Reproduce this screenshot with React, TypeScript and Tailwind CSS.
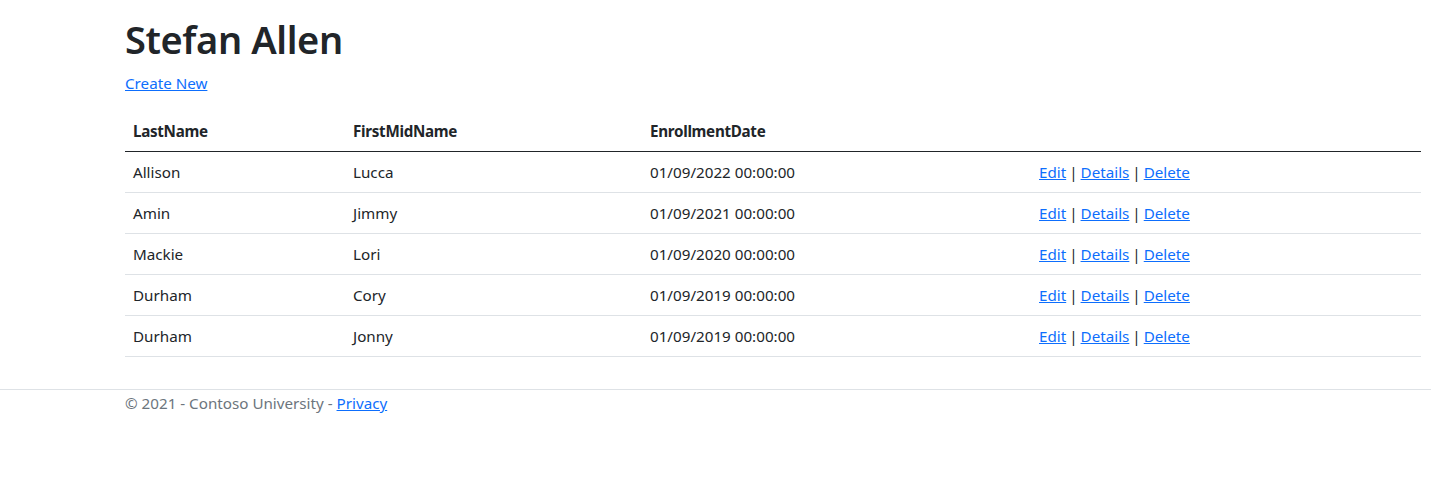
import React from "react";

const rows = [
  ["Allison", "Lucca", "01/09/2022 00:00:00"],
  ["Amin", "Jimmy", "01/09/2021 00:00:00"],
  ["Mackie", "Lori", "01/09/2020 00:00:00"],
  ["Durham", "Cory", "01/09/2019 00:00:00"],
  ["Durham", "Jonny", "01/09/2019 00:00:00"],
];

const font = { fontFamily: '"Noto Sans", "Open Sans", Arial, sans-serif' };

export default function App() {
  return (
    <div className="min-h-screen bg-white text-[#212529] text-[15.2px] leading-[24px]" style={font}>
      <main className="pl-[125px] pr-[10px] pt-[15px] pb-4">
        <h1 className="text-[38px] leading-[48px] font-semibold mb-2 tracking-[-0.4px]">Stefan Allen</h1>
        <p className="mb-4">
          <a href="#" className="text-[#0d6efd] underline">Create New</a>
        </p>
        <table className="w-[1296px] mb-4 border-collapse">
          <thead>
            <tr className="border-b border-[#212529]">
              <th className="w-[220px] text-left font-bold px-2 py-2 tracking-[-0.3px]">LastName</th>
              <th className="w-[297px] text-left font-bold px-2 py-2 tracking-[-0.3px]">FirstMidName</th>
              <th className="w-[389px] text-left font-bold px-2 py-2 tracking-[-0.3px]">EnrollmentDate</th>
              <th className="px-2 py-2"></th>
            </tr>
          </thead>
          <tbody>
            {rows.map((r, i) => (
              <tr key={i} className="border-b border-[#dee2e6]">
                <td className="px-2 py-2">{r[0]}</td>
                <td className="px-2 py-2">{r[1]}</td>
                <td className="px-2 py-2">{r[2]}</td>
                <td className="px-2 py-2">
                  <a href="#" className="text-[#0d6efd] underline">Edit</a>
                  <span className="mx-[3px]">|</span>
                  <a href="#" className="text-[#0d6efd] underline">Details</a>
                  <span className="mx-[3px]">|</span>
                  <a href="#" className="text-[#0d6efd] underline">Delete</a>
                </td>
              </tr>
            ))}
          </tbody>
        </table>
      </main>
      <footer className="border-t border-[#dee2e6] text-[#6c757d]">
        <div className="pl-[125px] pt-[1px]">
          © 2021 - Contoso University - <a href="#" className="text-[#0d6efd] underline">Privacy</a>
        </div>
      </footer>
    </div>
  );
}
